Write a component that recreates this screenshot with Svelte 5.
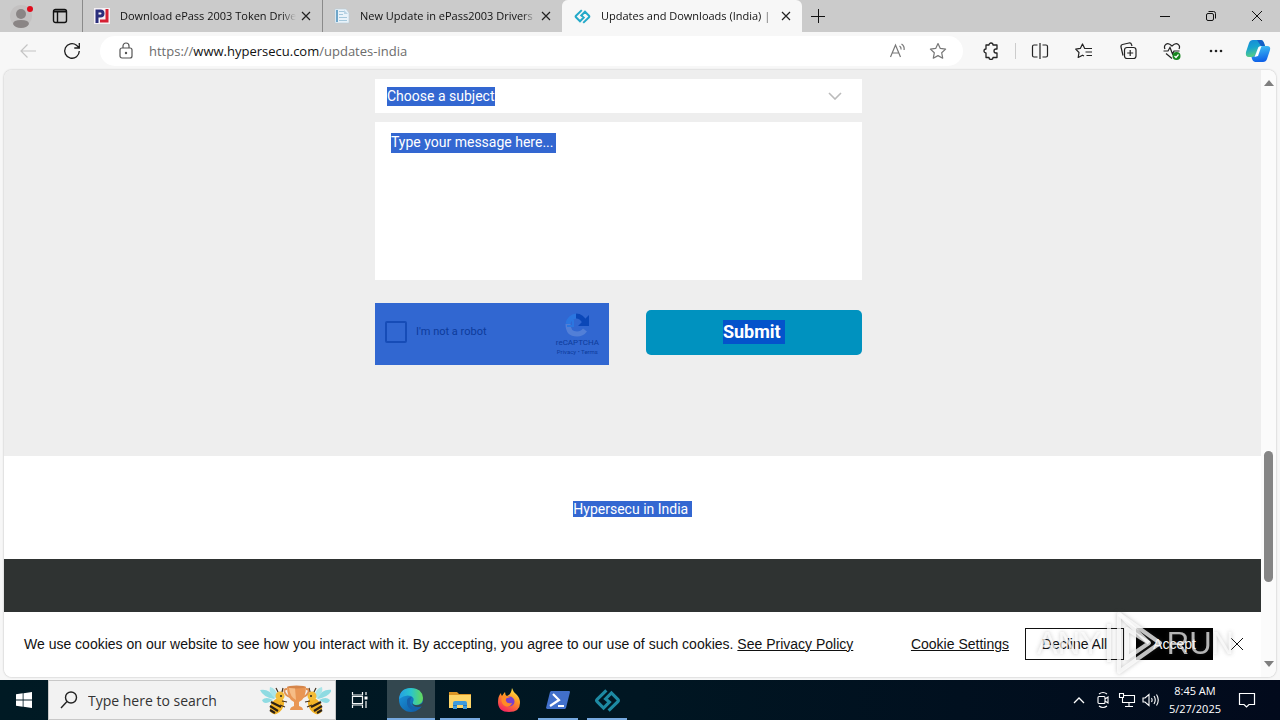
<script>
  const tabs = [
    { title: 'Download ePass 2003 Token Drive', icon: 'pj', active: false },
    { title: 'New Update in ePass2003 Drivers', icon: 'doc', active: false },
    { title: 'Updates and Downloads (India) |', icon: 'hyper', active: true }
  ];
  const apps = [
    { name: 'Microsoft Edge', icon: 'edge', state: 'active' },
    { name: 'File Explorer', icon: 'files', state: 'open' },
    { name: 'Firefox', icon: 'firefox', state: '' },
    { name: 'PowerShell', icon: 'shell', state: 'open' },
    { name: 'Hypersecu', icon: 'hyper', state: 'open' }
  ];
</script>

{#snippet hyper(size, color)}
  <svg width={size} height={size} viewBox="0 0 24 24" fill="none" stroke={color} stroke-width="2.800">
    <path d="M11 3 2.800 11q-1 1 0 2l5.700 5.700 5.200-5.200-3.400-3 5.200-5.200L21.200 11q1 1 0 2L13 21" />
  </svg>
{/snippet}

<div class="screen">
  <header class="tabstrip">
    <button class="profile" aria-label="Profile">
      <svg width="24" height="26" viewBox="0 0 24 26"><circle cx="12" cy="13" r="11" fill="#c3c1c1" /><circle cx="12" cy="11" r="5" fill="#8a8585" /><path d="M4 21q0-4 8-4t8 4q-2 4-8 4t-8-4z" fill="#8a8585" /><circle cx="21" cy="6" r="3" fill="#e00b1c" /></svg>
    </button>
    <button class="workspace" aria-label="Tab actions">
      <svg width="16" height="16" viewBox="0 0 16 16" fill="none" stroke="#111" stroke-width="1.4"><rect x="1.500" y="1.500" width="13" height="13" rx="2" /><path d="M1.500 3.500h13" stroke-width="2" /><path d="M5.500 4v10" /></svg>
    </button>
    <nav class="tabs">
      {#each tabs as tab}
        <div class="tab" class:active={tab.active}>
          {#if tab.icon === 'pj'}
            <svg width="16" height="16" viewBox="0 0 16 16"><path fill="#f5f0f4" d="M0 0h16v16H0z" /><path fill="none" stroke="#2a2e7c" stroke-width="3" d="M3 15V3h3.500q2.500 0 2.500 2.500T6.500 8H4" /><path fill="none" stroke="#d52033" stroke-width="3" d="M13 1v12H6" /></svg>
          {:else if tab.icon === 'doc'}
            <svg width="16" height="16" viewBox="0 0 16 16"><path fill="#e9f3fa" stroke="#b9ccd8" stroke-width=".6" d="M1 1h11l3 4v10H1z" /><path fill="#6fa6c9" d="M2 2h2v12H2z" /><path stroke="#a5c8dc" d="M5 3.500h6M5 6.500h4M5 9.500h8M5 12.500h8" /><path fill="#b9d4e4" d="M10 2l4 4h-4z" /></svg>
          {:else}
            {@render hyper(17, '#23a9c9')}
          {/if}
          <a href="#tab" class="title">{tab.title}</a>
          <button class="close" aria-label="Close tab"><svg width="10" height="10" viewBox="0 0 10 10" stroke="#222" stroke-width="1.200"><path d="m1 1 8 8M9 1 1 9" /></svg></button>
        </div>
      {/each}
    </nav>
    <button class="newtab" aria-label="New tab"><svg width="14" height="14" viewBox="0 0 14 14" stroke="#111"><path d="M0 7.500h14M7.500 0v14" /></svg></button>
    <div class="window-buttons">
      <button aria-label="Minimize"><svg width="12" height="12" viewBox="0 0 12 12" stroke="#111"><path d="M1 6.500h10" /></svg></button>
      <button aria-label="Restore"><svg width="12" height="12" viewBox="0 0 12 12" fill="none" stroke="#111"><rect x="1.500" y="3.500" width="7" height="7" rx="1.500" /><path d="M3.500 1.500h5q2 0 2 2v5" /></svg></button>
      <button aria-label="Close"><svg width="12" height="12" viewBox="0 0 12 12" stroke="#111"><path d="m1 1 10 10M11 1 1 11" /></svg></button>
    </div>
  </header>

  <div class="toolbar">
    <button class="nav" aria-label="Back"><svg width="18" height="16" viewBox="0 0 18 16" fill="none" stroke="#c4c4c4" stroke-width="1.200"><path d="M17 8H2M8.500 1.500 2 8l6.500 6.500" /></svg></button>
    <button class="nav" aria-label="Refresh"><svg width="18" height="18" viewBox="0 0 18 18" fill="none" stroke="#1c1c1c" stroke-width="1.300"><path d="M16.300 9A7.300 7.300 0 1 1 13.500 3.200L16 5.600M16.300 1v5h-5" /></svg></button>
    <div class="address">
      <svg width="14" height="18" viewBox="0 0 14 18" fill="none" stroke="#555" stroke-width="1.200"><rect x="1" y="6" width="12" height="10" rx="2" /><path d="M4 6V4a3 3 0 0 1 6 0v2" /><circle cx="7" cy="11" r=".6" fill="#555" /></svg>
      <div class="url">https://<b>www.hypersecu.com</b>/updates-india</div>
      <button aria-label="Read aloud"><svg width="18" height="18" viewBox="0 0 18 18" fill="none" stroke="#777" stroke-width="1.200"><path d="M1.500 15 6.500 3l5 12M3.200 11h6.600M10.500 4q1.800 1 1.600 3.500M12.500 2q3.200 2 2.600 6" /></svg></button>
      <button aria-label="Favorite"><svg width="18" height="18" viewBox="0 0 18 18" fill="none" stroke="#777" stroke-width="1.200" stroke-linejoin="round"><path d="m9 1.500 2.300 4.900 5.300.7-3.900 3.700 1 5.400L9 13.600l-4.700 2.600 1-5.400-3.900-3.700 5.300-.7z" /></svg></button>
    </div>
    <div class="tools">
      <button aria-label="Extensions"><svg width="18" height="18" viewBox="0 0 18 18" fill="none" stroke="#222" stroke-width="1.300" stroke-linejoin="round"><path d="M4 3h3a2 2 0 0 1 4 0h4v4h-1a2 2 0 1 0 0 4h1v4.500h-4a2 2 0 0 1-4 0H4V11a2 2 0 1 1 0-4z" /></svg></button>
      <span class="divider"></span>
      <button aria-label="Split screen"><svg width="18" height="18" viewBox="0 0 18 18" fill="none" stroke="#222" stroke-width="1.200"><path d="M6.500 3H3Q1.500 3 1.500 4.500v9Q1.500 15 3 15h3.500M11.500 3H15q1.500 0 1.500 1.500v9Q16.500 15 15 15h-3.500M9 1v16" /></svg></button>
      <button aria-label="Favorites list"><svg width="18" height="18" viewBox="0 0 18 18" fill="none" stroke="#222" stroke-width="1.200" stroke-linejoin="round"><path d="M17 6.500H9.700L7.500 2 5.300 6.400l-4.600.7L4 10.500l-.8 5 4.300-2.300 1.500.8M10.500 10H17M11.500 13.500H17" /></svg></button>
      <button aria-label="Collections"><svg width="18" height="18" viewBox="0 0 18 18" fill="none" stroke="#222" stroke-width="1.200"><path d="M4 13.500 2 5q-.4-2 1.500-2.500L10 1q2-.4 2.500 1.500L13 4" /><rect x="5.500" y="5.500" width="11.500" height="11" rx="2.500" /><path d="M11.200 8v6M8.200 11h6" /></svg></button>
      <button aria-label="Browser essentials"><svg width="18" height="18" viewBox="0 0 18 18" fill="none" stroke="#222" stroke-width="1.200"><path d="M2 7Q.500 4 3 2.200T9 4q3.500-3.500 6-1.800T16 7M.5 9H5l2-3.500L9.500 12 11 9h5.500M3 11.500l6 5" /><circle cx="13.500" cy="14" r="4" fill="#16851e" stroke="none" /><path d="m11.500 14 1.500 1.500 2.500-3" stroke="#fff" /></svg></button>
      <button aria-label="More"><svg width="18" height="18" viewBox="0 0 18 18" fill="#222"><circle cx="4" cy="9" r="1.300" /><circle cx="9" cy="9" r="1.300" /><circle cx="14" cy="9" r="1.300" /></svg></button>
    </div>
    <button class="copilot" aria-label="Copilot">
      <svg width="26" height="24" viewBox="0 0 26 24"><defs><linearGradient id="cpa" x2=".3" y2="1"><stop stop-color="#1687d9" /><stop offset=".5" stop-color="#18a4cf" /><stop offset="1" stop-color="#59cf82" /></linearGradient><linearGradient id="cpb" x2=".2" y2="1"><stop stop-color="#42c7f4" /><stop offset="1" stop-color="#1063e8" /></linearGradient></defs><path fill="url(#cpa)" d="M8 1h8q2 0 3 3l1 3h-4q-2 0-3 3l-2 6q-1 2-3 2H4q-4 0-3-5L4 4q1-3 4-3z" /><path fill="url(#cpb)" d="M18 7h4q4 0 3 4l-3 9q-1 3-4 3h-8q-2 0-3-3l-.500-2q3 0 4-3l2.500-6q1-2 5-2z" /><path fill="#155fc6" d="M12 1h4q2 0 3 3l1 3h-4q-2-3-4-6z" /><path fill="#fff" d="m13.500 8 3-1-3.500 10-3.500 1z" /></svg>
    </button>
  </div>

  <div class="viewport">
    <main>
      <section class="contact">
        <form>
          <select aria-label="Choose a subject"><option>Choose a subject</option></select>
          <textarea aria-label="Message" placeholder="Type your message here..."></textarea>
          <div class="actions">
            <div class="captcha">
              <label><input type="checkbox" />I'm not a robot</label>
              <div class="badge">
                <svg width="26" height="26" viewBox="0 0 26 26" fill="none" stroke-width="5"><path d="M4 12a9 9 0 0 1 9-8" stroke="#2b76e0" /><path d="M12 4q6 0 9 7" stroke="#0b47b8" /><path d="M25 3v11H14z" fill="#0b47b8" /><path d="M4 12q0 10 9 10 5 0 8-4" stroke="#527fd7" /><path d="M9 8v6H3" stroke="#2b76e0" stroke-width="2" /></svg>
                <span>reCAPTCHA</span>
                <small><a href="#privacy">Privacy</a> • <a href="#terms">Terms</a></small>
              </div>
            </div>
            <button type="button" class="submit"><mark>Submit&nbsp;</mark></button>
          </div>
        </form>
      </section>
      <section class="country"><p><mark>Hypersecu in India&nbsp;</mark></p></section>
      <footer></footer>
      <aside class="cookies">
        <p>We use cookies on our website to see how you interact with it. By accepting, you agree to our use of such cookies. <a href="#policy">See Privacy Policy</a></p>
        <div class="choices">
          <button class="link">Cookie Settings</button>
          <button class="decline">Decline All</button>
          <button class="accept">Accept</button>
          <button class="dismiss" aria-label="Close"><svg width="14" height="14" viewBox="0 0 14 14" stroke="#111"><path d="m1 1 12 12M13 1 1 13" /></svg></button>
        </div>
      </aside>
    </main>
    <div class="scrollbar">
      <svg width="10" height="6" viewBox="0 0 10 6"><path fill="#7f7f7f" d="M0 6 5 0l5 6z" /></svg>
      <div class="track"><i class="before"></i><i class="thumb"></i><i class="after"></i></div>
      <svg width="10" height="6" viewBox="0 0 10 6"><path fill="#7f7f7f" d="M0 0h10L5 6z" /></svg>
    </div>
    <div class="watermark">
      <span>ANY</span>
      <svg width="58" height="64" viewBox="0 0 58 64" fill="none" stroke="#fff" stroke-opacity=".75" stroke-width="4" stroke-linejoin="round"><path d="M14 2v58l41-29z" /><path d="M22 17v29l22-15z" /><path d="M4 12v38M14 2l30 29" /></svg>
      <span>RUN</span>
    </div>
  </div>

  <footer class="taskbar">
    <button class="start" aria-label="Start"><svg width="16" height="16" viewBox="0 0 16 16" fill="#fff"><path d="m0 2.300 6.700-1v6.300H0zM7.500 1.200 16 0v7.600H7.500zM0 8.400h6.700v6.300l-6.700-1zM7.500 8.400H16V16l-8.500-1.200z" /></svg></button>
    <label class="search">
      <svg width="18" height="18" viewBox="0 0 18 18" fill="none" stroke="#222" stroke-width="1.400"><circle cx="11" cy="6.500" r="5.500" /><path d="M7 10.500 1 17" /></svg>
      <input type="text" aria-label="Search" placeholder="Type here to search" />
      <svg width="72" height="32" viewBox="0 0 72 32">
        <g id="bee"><path fill="#8fdbe2" d="M15 15Q4 13 1 6q9-2 15 8zM14 16Q5 22 3 16q4-4 11 0z" /><path fill="#a9e5e8" d="M17 14q-8-4-6-11 6 1 8 10z" /><ellipse cx="18" cy="22" rx="6" ry="9" transform="rotate(35 18 22)" fill="#f2b326" /><path d="m12 18 10 5M11 22l8 5M11 26l5 3" stroke="#2b2015" stroke-width="2.200" /><circle cx="21" cy="12" r="4.500" fill="#f3bc37" /><path d="m19 8-2-4M23 8l1-4M23 17l5 1M21 21l5 2" stroke="#43301d" stroke-width="1.200" fill="none" /><circle cx="22" cy="12" r="1" fill="#222" /></g>
        <use href="#bee" transform="matrix(-1 0 0 1 74 0)" />
        <path fill="none" stroke="#df9154" stroke-width="1.800" d="M28 5q-4 0-2 4 2 4 7 4M47 5q4 0 2 4-2 4-7 4" /><path fill="#e99654" d="M28 3h19q0 12-7 15v4q4 1 4 4H31q0-3 4-4v-4q-7-3-7-15z" /><path fill="#f6bd86" d="M30 4h6l1 12q-6-3-7-12z" /><ellipse cx="37.500" cy="3" rx="9.500" ry="1.500" fill="#d5854a" />
      </svg>
    </label>
    <button class="app" aria-label="Task view"><svg width="18" height="18" viewBox="0 0 18 18" fill="none" stroke="#f3f6f6" stroke-width="1.200"><path d="M1.500 1v3h10V1M1.500 17v-3h10v3M1.500 5.500h10v7h-10zM15 1v3M15 10v7" /><path fill="#fff" stroke="none" d="M13.500 5.500h3v3h-3z" /></svg></button>
    <div class="apps">
      {#each apps as app}
        <button class="app {app.state}" aria-label={app.name}>
          {#if app.icon === 'edge'}
            <svg width="26" height="26" viewBox="0 0 26 26"><defs><linearGradient id="eda"><stop stop-color="#249fe5" /><stop offset=".5" stop-color="#2ac5cc" /><stop offset="1" stop-color="#65d958" /></linearGradient><linearGradient id="edb" x2="1" y2="1"><stop stop-color="#1b9be0" /><stop offset="1" stop-color="#0d549e" /></linearGradient></defs><circle cx="13" cy="13" r="12" fill="url(#edb)" /><path fill="url(#eda)" d="M1 12Q2 1 13 1t12 10q0 7-7 7-4 0-3-3 2-4-2-6-6-2-12 3z" /><path fill="#1660aa" d="M9 13q-1 8 6 10 6 1 9-4-3 2-8 1-4-1-4-5 0-3 2-5-4 0-5 3z" /><path fill="#33474f" d="M14 16q2 3 7 2 3-1 5-3v3q-2 2-6 2-5 0-6-4z" /></svg>
          {:else if app.icon === 'files'}
            <svg width="22" height="20" viewBox="0 0 22 20"><path fill="#dc9625" d="M0 2h8l2 2h12v5H0z" /><path fill="#fed567" d="M0 5h22v13H0z" /><path fill="#3f9bdc" d="M4 19v-6q0-2 2-2h10q2 0 2 2v6h-4v-4H8v4z" /><path fill="#2878b7" d="M4 15h4v1H4zM14 15h4v1h-4z" /></svg>
          {:else if app.icon === 'firefox'}
            <svg width="24" height="26" viewBox="0 0 24 26"><defs><linearGradient id="ffx" x1=".8" x2=".3" y2="1"><stop stop-color="#fff04a" /><stop offset=".45" stop-color="#ff9523" /><stop offset="1" stop-color="#f52361" /></linearGradient></defs><path fill="url(#ffx)" d="M15 1q1 4 5 7 3 3 3 8 0 9-11 9T1 15q0-6 3-9 0 2 1 3 2-3 3-4 0 3 2 4 4-1 5-8z" /><circle cx="12.500" cy="14.500" r="5" fill="#7940cc" /><path fill="#ff8b26" d="M5 9q5-1 8 2-5-1-4 3 1 3 6 2-2 5-7 3-5-3-3-10z" /></svg>
          {:else if app.icon === 'shell'}
            <svg width="24" height="20" viewBox="0 0 24 20"><path fill="#4170cb" d="M5 1h18q1 0 1 1l-4 16-1 1H1l-1-1L4 2z" /><path fill="none" stroke="#fff" stroke-width="2.200" d="m7 4 6 6-9 6M12 16h6" /></svg>
          {:else}
            {@render hyper(27, '#1d8aa3')}
          {/if}
        </button>
      {/each}
    </div>
    <div class="tray">
      <svg height="8" viewBox="0 0 12 8" fill="none" stroke="#fff" stroke-width="1.300"><path d="m1 7 5-5 5 5" /></svg>
      <svg height="18" viewBox="0 0 12 18" fill="none" stroke="#fff" stroke-width="1.100"><rect x="1" y="5.500" width="7" height="7" rx="1" /><path d="m8 8 3-2v6l-3-2M2 3q4-3 8 0M2 15q4 3 8 0" /></svg>
      <svg height="16" viewBox="0 0 18 16" fill="none" stroke="#fff" stroke-width="1.100"><path d="M5.500 3.500h11v7h-12V6M7 14.500h8M11 11v3M1.500 1.500h4v4h-4z" /></svg>
      <svg height="14" viewBox="0 0 18 14" fill="none" stroke="#fff" stroke-width="1.100"><path d="M1 5h2l4-3.500v11L3 9H1zM9.500 5q1.200 2 0 4M12 3q2.500 4 0 8M14.500 1.500q3.500 5.500 0 11" /></svg>
      <time><span>8:45 AM</span><span>5/27/2025</span></time>
      <svg height="18" viewBox="0 0 18 18" fill="none" stroke="#fff" stroke-width="1.200"><path d="M1.500 2.500h15v11H11L8.500 16 6 13.500H1.500z" /></svg>
    </div>
  </footer>
</div>

<style>
  :global(body) { margin: 0; }
  * { box-sizing: border-box; }
  button { border: 0; padding: 0; background: none; color: inherit; font: inherit; display: flex; align-items: center; justify-content: center; }
  svg { display: block; flex: none; }
  p { margin: 0; }
  a { color: inherit; }
  mark { background: #3367d1; color: #fff; }

  .screen { display: flex; flex-direction: column; height: 100vh; overflow: hidden; background: #f7f7f7; font: 11px/16px "Open Sans", "Noto Sans", sans-serif; color: #111; }

  .tabstrip { display: flex; height: 32px; flex: none; background: #cbcbcb; }
  .profile { width: 42px; }
  .workspace { width: 36px; }
  .tabs { display: flex; flex: 0 1 724px; min-width: 0; padding-left: 4px; }
  .tab { display: flex; flex: 1 1 0; min-width: 0; align-items: center; gap: 10px; padding: 0 8px 0 11px; border-left: 1px solid #8a8a8a; }
  .tab.active { background: #f7f7f7; border-color: #f7f7f7; border-radius: 6px 6px 0 0; }
  .title { flex: 1; min-width: 0; margin-right: -8px; overflow: hidden; white-space: nowrap; text-decoration: none; mask-image: linear-gradient(to right, #000 92%, transparent); }
  .close { width: 16px; height: 16px; }
  .newtab { width: 32px; }
  .window-buttons { display: flex; margin-left: auto; }
  .window-buttons button { width: 46px; }

  .toolbar { display: flex; height: 38px; flex: none; align-items: center; padding: 0 9px 0 6px; }
  .nav { width: 44px; height: 32px; }
  .address { display: flex; flex: 1; height: 30px; align-items: center; margin-left: 6px; padding: 0 16px 0 19px; border-radius: 15px; background: #fff; color: #6c6c6c; font-size: 13px; gap: 22px; }
  .address .url { flex: 1; margin-left: -6px; }
  .address b { font-weight: 400; color: #111; }
  .tools { display: flex; align-items: center; }
  .tools button { width: 44px; height: 32px; }
  .tools button:first-child { margin: 0 2px 0 6px; }
  .divider { width: 1px; height: 16px; margin-right: 2px; background: #ccc; }
  .copilot { width: 26px; margin-left: 7px; }

  .viewport { position: relative; display: flex; flex: 1; min-height: 0; margin: 0 4px 3px; border-radius: 8px; overflow: hidden; box-shadow: 0 0 2px #aaa; background: #fff; font-family: Roboto, sans-serif; }
  main { display: flex; flex: 1; min-width: 0; flex-direction: column; }
  .contact { display: flex; justify-content: center; padding: 9px 28px 91px 0; background: #eee; }
  form { display: flex; flex-direction: column; width: 39%; min-width: 487px; }
  select, textarea { width: 100%; border: 0; border-radius: 0; outline: 0; color: #fff; font: 14px/20px Roboto, sans-serif; resize: none; appearance: none; background-color: #fff; background-repeat: no-repeat; }
  select { height: 34px; padding: 0 12px; background-image: url("data:image/svg+xml,%3Csvg xmlns='http://www.w3.org/2000/svg' width='14' height='8' fill='none' stroke='%23bbb' stroke-width='1.600'%3E%3Cpath d='m1 1 6 6 6-6'/%3E%3C/svg%3E"), linear-gradient(#3367d1, #3367d1); background-size: 14px 8px, 108px 19px; background-position: right 20px center, 12px 8px; }
  textarea { height: 158px; margin-top: 9px; padding: 10px 16px; background-image: linear-gradient(#3367d1, #3367d1); background-size: 165px 20px; background-position: 16px 11px; }
  textarea::placeholder { color: #fff; opacity: 1; }
  .actions { display: flex; justify-content: space-between; align-items: center; margin-top: 23px; }
  .captcha { display: flex; justify-content: space-between; align-items: center; width: 234px; height: 62px; padding: 0 10px; background: #3167d1; color: #0d3b9b; }
  .captcha label { display: flex; align-items: center; gap: 9px; padding-bottom: 4px; font-size: 11px; }
  .captcha input { appearance: none; width: 22px; height: 22px; margin: 0; border: 2px solid #164cb7; border-radius: 2px; }
  .badge { display: flex; flex-direction: column; align-items: center; font-size: 8px; line-height: 9px; }
  .badge small { font-size: 6px; white-space: nowrap; }
  .badge a { text-decoration: none; }
  .submit { width: 216px; height: 45px; margin-bottom: 4px; border-radius: 5px; background: #0092bf; font-size: 18px; line-height: 24px; font-weight: 700; color: #fff; }
  .submit mark { background: #0453cb; line-height: 24px; }
  .country { padding: 44px 0 41px; text-align: center; font-size: 14px; line-height: 18px; }
  main > footer { flex: 1; background: #2f3332; }
  .cookies { display: flex; align-items: center; justify-content: space-between; height: 65px; padding: 0 17px 2px 20px; background: #fff; font: 14px/18px "Liberation Sans", Arial, sans-serif; }
  .choices { display: flex; align-items: center; }
  .choices button { height: 32px; }
  .choices .link { margin-right: 16px; text-decoration: underline; }
  .choices .decline { width: 99px; margin-right: 12px; border: 1px solid #111; }
  .choices .accept { width: 77px; margin-right: 17px; background: #000; color: #fff; }
  .scrollbar { display: flex; flex-direction: column; align-items: center; width: 15px; padding: 10px 0; background: #fbfbfb; }
  .track { display: flex; flex: 1; flex-direction: column; width: 9px; padding: 6px 0; }
  .before { flex: 358; }
  .thumb { flex: 131; border-radius: 5px; background: #858585; }
  .after { flex: 73; }
  .watermark { position: absolute; right: 42px; bottom: 1px; display: flex; align-items: center; gap: 4px; pointer-events: none; color: rgba(255, 255, 255, .7); font: 31px/40px "Liberation Sans", sans-serif; filter: drop-shadow(0 0 2px rgba(70, 70, 70, .4)); }

  .taskbar { display: flex; height: 40px; flex: none; align-items: stretch; background: linear-gradient(to right, #001a24, #001622 50%, #020a1c); color: #fff; }
  .start { width: 48px; }
  .search { display: flex; align-items: center; width: 288px; padding: 0 4px 0 11px; border: 1px solid #c8c8c8; background: #f2f2f2; }
  .search input { flex: 1; min-width: 0; padding: 2px 0 0 10px; border: 0; outline: 0; background: none; font: 14px/20px "Open Sans", sans-serif; }
  .search input::placeholder { color: #333; opacity: 1; }
  .app { width: 48px; }
  .apps { display: flex; gap: 1px; margin-left: 3px; }
  .apps .app.active { background: #33474f; box-shadow: inset 0 -2px #76a9e0; }
  .apps .app.open { background: linear-gradient(#76a9e0, #76a9e0) center bottom / 40px 2px no-repeat; }
  .tray { display: flex; align-items: center; gap: 6px; margin-left: auto; padding-right: 24px; }
  .tray svg { width: 18px; }
  time { display: flex; flex-direction: column; align-items: center; margin: 0 11px 0 3px; line-height: 18px; }
</style>
